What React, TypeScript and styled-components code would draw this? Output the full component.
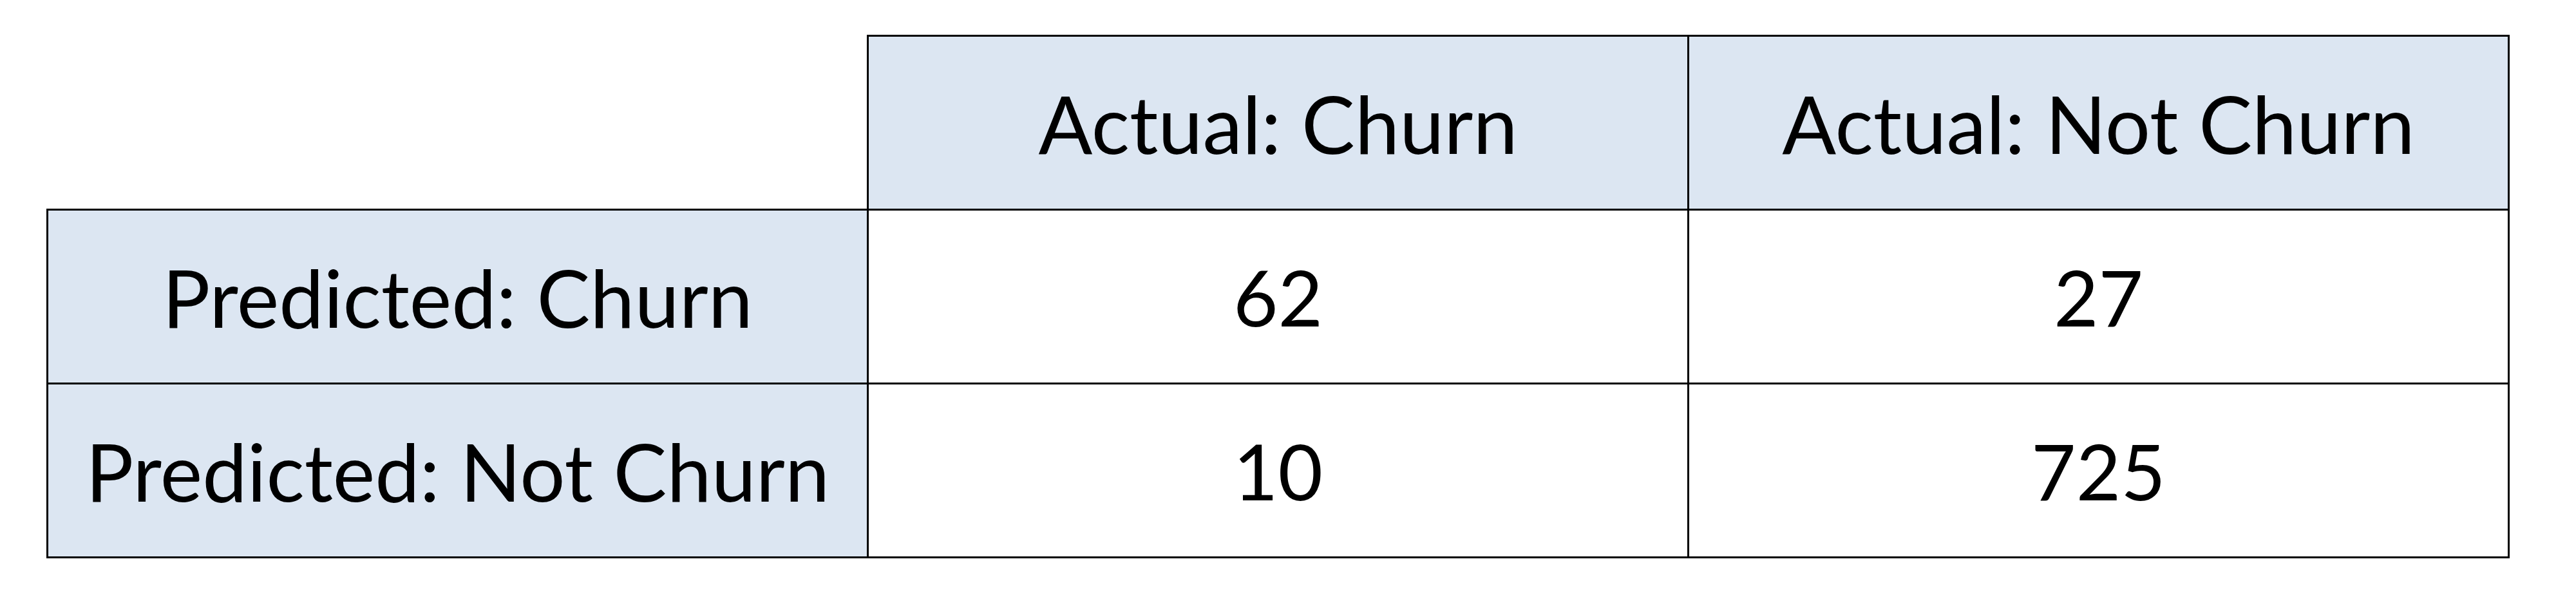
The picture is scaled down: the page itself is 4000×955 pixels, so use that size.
import styled, { createGlobalStyle } from "styled-components";

const GlobalStyle = createGlobalStyle`
  html, body {
    margin: 0;
    padding: 0;
    background: #ffffff;
  }
`;

const Page = styled.div`
  width: 4000px;
  height: 955px;
  padding: 54px 0 0 72px;
  box-sizing: border-box;
  background: #ffffff;
`;

const Matrix = styled.table`
  border-collapse: collapse;
  table-layout: fixed;
  width: 3823px;
  font-family: Lato, "Liberation Sans", sans-serif;
  color: #000;
`;

const Cell = styled.td<{ $label?: boolean; $blank?: boolean }>`
  width: 1274px;
  height: 270px;
  padding: 0;
  box-sizing: border-box;
  text-align: center;
  vertical-align: middle;
  font-size: ${props => props.$label ? "124px" : "120px"};
  line-height: 1;
  border: ${props => props.$blank ? "none" : "3px solid #000"};
  background: ${props => props.$label ? "#dce6f2" : props.$blank ? "transparent" : "#ffffff"};
`;

const columns = ["Actual: Churn", "Actual: Not Churn"];

const rows = [
    { label: "Predicted: Churn", values: [62, 27] },
    { label: "Predicted: Not Churn", values: [10, 725] }
];

const App = () => {
    return (
        <Page>
            <GlobalStyle />
            <Matrix>
                <tbody>
                    <tr>
                        <Cell $blank />
                        {columns.map(col => (
                            <Cell $label key={col}>{col}</Cell>
                        ))}
                    </tr>
                    {rows.map(row => (
                        <tr key={row.label}>
                            <Cell $label>{row.label}</Cell>
                            {row.values.map((v, idx) => (
                                <Cell key={`${row.label}-${idx}`}>{v}</Cell>
                            ))}
                        </tr>
                    ))}
                </tbody>
            </Matrix>
        </Page>
    );
}

export default App;
